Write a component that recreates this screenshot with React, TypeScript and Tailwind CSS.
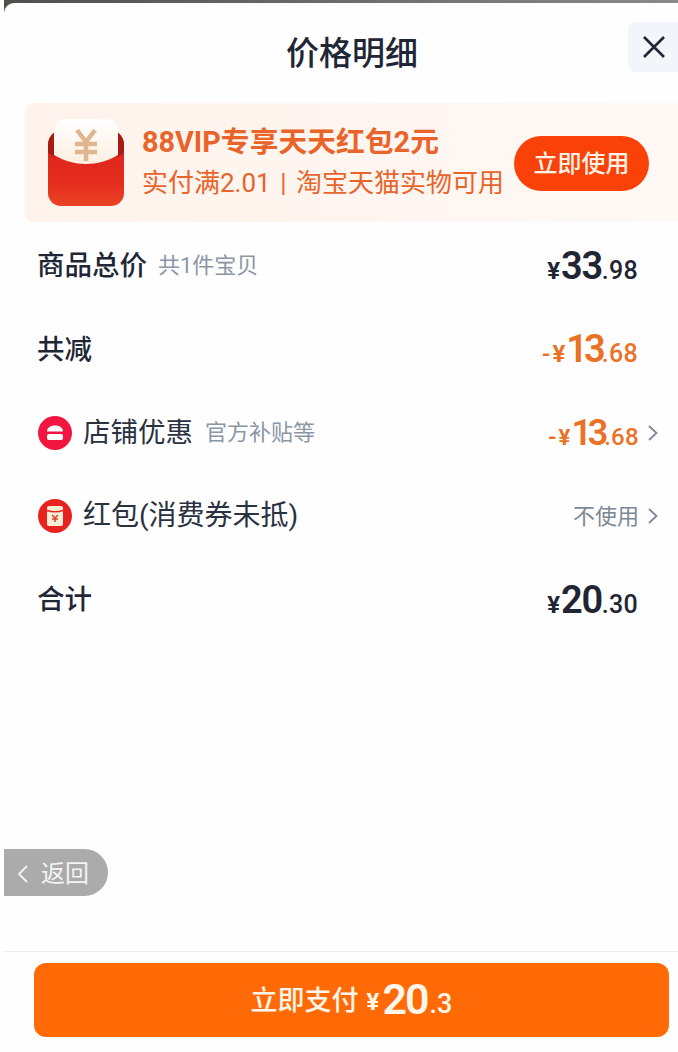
const cjk = "font-['Roboto','Noto_Sans_CJK_SC',sans-serif]";

function Price({ value, cents, tone = "text-[#1f2533]", minus = false, small = false }: { value: string; cents: string; tone?: string; minus?: boolean; small?: boolean }) {
  return (
    <div className={`flex items-baseline font-medium leading-none ${tone}`}>
      {minus && <span className="text-[22px] font-bold mr-[2px]">-</span>}
      <span className={`${small ? "text-[22px]" : "text-[24px]"} font-bold mr-[1px]`}>¥</span>
      <span className={`${small ? "text-[36px] tracking-[-4.2px]" : minus ? "text-[38px] tracking-[-4px]" : "text-[38px] tracking-[-1.4px]"} font-semibold`}>{value}</span>
      <span className={`${small ? "text-[24px]" : "text-[25px]"} font-medium tracking-[0.3px]`}>.{cents}</span>
    </div>
  );
}

function Chevron() {
  return (
    <svg width="12" height="18" viewBox="0 0 12 18" fill="none" stroke="#7d8896" strokeWidth="1.8" className="ml-[8px]">
      <path d="M2 2l7.5 7L2 16" />
    </svg>
  );
}

function RedPacket() {
  return (
    <svg width="77" height="88" viewBox="0 0 77 88" className="shrink-0">
      <defs>
        <linearGradient id="packetBody" x1="0" y1="0" x2="0" y2="1">
          <stop offset="0" stopColor="#d9231b" />
          <stop offset="0.7" stopColor="#e52d1e" />
          <stop offset="1" stopColor="#ea4423" />
        </linearGradient>
        <linearGradient id="packetFlap" x1="0" y1="0" x2="0" y2="1">
          <stop offset="0" stopColor="#ffffff" />
          <stop offset="1" stopColor="#fbefe0" />
        </linearGradient>
      </defs>
      <rect x="0" y="13" width="76" height="74" rx="13" fill="url(#packetBody)" />
      <path d="M0 26C0 20 3 15 7 13v25L0 34z" fill="#a91a14" />
      <path d="M76 26c0-6-3-11-7-13v25l7-4z" fill="#a91a14" />
      <path d="M6 13C6 5 11 0 18 0h40c7 0 12 5 12 13v23c-10 6-21 9-32 9S16 42 6 36z" fill="url(#packetFlap)" />
      <path d="M29 11l9 12 9-12M27 25h22M27 33h22M38 23v19" fill="none" stroke="#dfb68f" strokeWidth="4.500" />
    </svg>
  );
}

function ShopIcon() {
  return (
    <svg width="34" height="34" viewBox="0 0 34 34" className="ml-[1px] mr-[11px] shrink-0">
      <circle cx="17" cy="17" r="17" fill="#f0163f" />
      <path d="M9 15.500c0-3.500 3-6 8-6s8 2.500 8 6z" fill="#fff" />
      <rect x="9" y="18" width="16" height="6" rx="2" fill="#fff" />
    </svg>
  );
}

function PacketIcon() {
  return (
    <svg width="34" height="34" viewBox="0 0 34 34" className="ml-[1px] mr-[11px] shrink-0">
      <circle cx="17" cy="17" r="17" fill="#e8231f" />
      <rect x="9" y="7" width="16" height="20" rx="2" fill="#fdeed6" />
      <path d="M9 11.500c5 1.500 11 1.500 16 0" fill="none" stroke="#e8231f" strokeWidth="1.500" />
      <path d="M14 16l3 3 3-3M14 20h6M17 19v4" fill="none" stroke="#d2452f" strokeWidth="1.500" />
    </svg>
  );
}

function Row({ children }: { children: React.ReactNode }) {
  return <div className="flex h-[83.5px] items-center justify-between pl-[33px] pr-[40px] pt-[4px]">{children}</div>;
}

export default function App() {
  return (
    <div className={`relative flex h-[1052px] w-[678px] flex-col overflow-hidden bg-white ${cjk}`}>
      <div className="ml-[4px] flex flex-1 flex-col overflow-hidden bg-gradient-to-r from-[#4f4f4c] to-[#8a8a88] pt-[3px]">
        <div className="flex flex-1 flex-col overflow-hidden rounded-tl-[10px] bg-[#fefefe]">
          <div className="relative flex h-[100px] items-center justify-center pl-[22px]">
            <h1 className="pt-[2px] text-[33px] font-medium text-[#1f2737]">价格明细</h1>
            <div className="absolute right-0 top-[19px] flex h-[50px] w-[50px] items-center justify-center rounded-l-[8px] bg-[#f2f5f9]">
              <svg width="26" height="26" viewBox="0 0 26 26" fill="none" stroke="#1f2737" strokeWidth="2.600" className="ml-[2px]">
                <path d="M3 3l20 20M23 3L3 23" />
              </svg>
            </div>
          </div>

          <div className="ml-[21px] flex h-[119px] items-center rounded-l-[8px] bg-gradient-to-r from-[#fff3ec] to-[#fff8f4] pl-[23px]">
            <RedPacket />
            <div className="ml-[17px] flex w-[372px] flex-col pt-[1px] text-[#e8642a]">
              <div className="text-[28.8px] font-bold leading-[40px] whitespace-nowrap">88VIP专享天天红包2元</div>
              <div className="text-[26px] leading-[42px] whitespace-nowrap [word-spacing:3px]">实付满2.01 | 淘宝天猫实物可用</div>
            </div>
            <button className="mt-[2px] flex h-[55px] w-[135px] items-center justify-center rounded-full bg-[#fa4208] text-[24px] font-medium text-[#fff3e8]">
              立即使用
            </button>
          </div>

          <Row>
            <div className="flex items-center">
              <span className="text-[27.5px] font-medium text-[#1f2737]">商品总价</span>
              <span className="ml-[11px] text-[22px] text-[#8a96a5]">共1件宝贝</span>
            </div>
            <Price value="33" cents="98" />
          </Row>
          <Row>
            <span className="text-[27.5px] font-medium text-[#1f2737]">共减</span>
            <Price value="13" cents="68" tone="text-[#ea7226]" minus />
          </Row>
          <Row>
            <div className="flex items-center">
              <ShopIcon />
              <span className="text-[27.5px] text-[#2a3240]">店铺优惠</span>
              <span className="ml-[12px] text-[22px] text-[#8a96a5]">官方补贴等</span>
            </div>
            <div className="-mr-[21px] flex items-center">
              <Price value="13" cents="68" tone="text-[#ea7226]" minus small />
              <Chevron />
            </div>
          </Row>
          <Row>
            <div className="flex items-center">
              <PacketIcon />
              <span className="text-[28px] text-[#2a3240]">红包(消费券未抵)</span>
            </div>
            <div className="-mr-[21px] flex items-center text-[22px] text-[#7d8896]">
              不使用
              <Chevron />
            </div>
          </Row>
          <Row>
            <span className="text-[27.5px] font-medium text-[#1f2737]">合计</span>
            <Price value="20" cents="30" />
          </Row>

          <div className="flex-1" />

          <div className="h-[101px] border-t border-[#eeeeee] pl-[30px] pt-[11px]">
            <button className="flex h-[74px] w-[635px] items-center justify-center rounded-[12px] bg-[#ff6a07] font-medium leading-none text-[#fff6ea]">
              <span className="mt-[2px] text-[27px]">立即支付</span>
              <span className="ml-[8px] mt-[4px] text-[24px] font-bold">¥</span>
              <span className="ml-[3px] mb-[2px] text-[43px] font-semibold tracking-[-2px]">20</span>
              <span className="ml-[2px] mt-[8px] text-[27px]">.3</span>
            </button>
          </div>
        </div>
      </div>

      <div className="absolute left-[4px] top-[849px] flex h-[47px] w-[104px] items-center rounded-r-full bg-[#ababab] pl-[12px] pt-[2px] text-[24px] text-[#f4f4f4]">
        <svg width="14" height="20" viewBox="0 0 14 20" fill="none" stroke="#f4f4f4" strokeWidth="1.800" className="mr-[11px]">
          <path d="M11 2L3 10l8 8" />
        </svg>
        返回
      </div>
    </div>
  );
}
